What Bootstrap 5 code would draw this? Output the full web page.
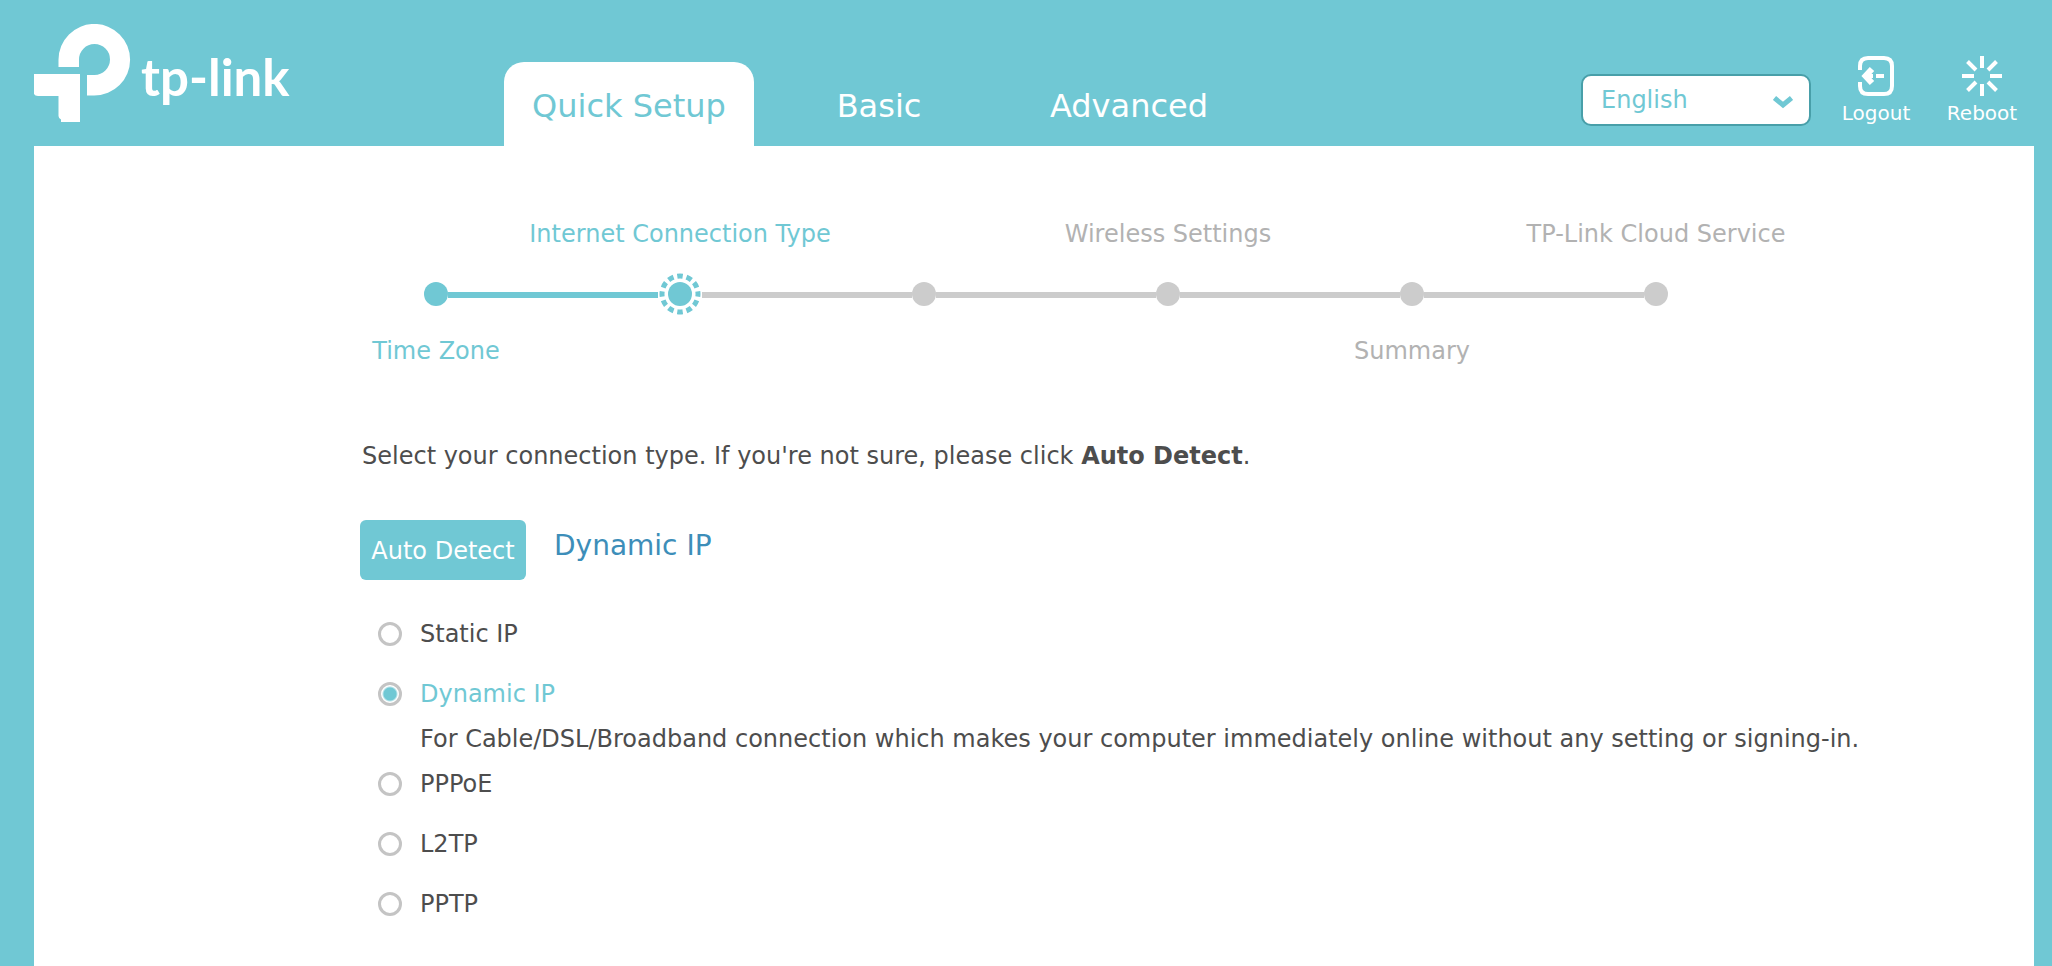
<!DOCTYPE html>
<html lang="en">
<head>
<meta charset="utf-8">
<meta name="viewport" content="width=device-width, initial-scale=1">
<title>Quick Setup</title>
<link href="https://cdn.jsdelivr.net/npm/bootstrap@5.3.0/dist/css/bootstrap.min.css" rel="stylesheet">
<style>
  :root { --teal: #70c8d4; --ink: #4d4d4d; }
  body { background: var(--teal); color: var(--ink); font-family: "DejaVu Sans", Verdana, sans-serif; font-size: 24px; line-height: 30px; }
  .shell { padding: 0 18px 0 34px; }
  .top-bar { height: 146px; }
  .brand-block { width: 470px; height: 146px; padding-top: 24px; gap: 10px; }
  .brand-word { font-family: Lato, sans-serif; font-size: 51px; font-weight: 700; line-height: 60px; padding-top: 23px; }
  .main-tabs .nav-link { width: 250px; height: 84px; padding: 24px 0 0; font-size: 32px; line-height: 40px; color: #fff; text-align: center; border-radius: 20px 20px 0 0; }
  .main-tabs .nav-link.active { background: #fff; color: var(--teal); }
  .tools { padding-right: 17px; }
  .lang { width: 230px; margin: 74px 30px 0 0; }
  .lang select { height: 52px; font-size: 24px; line-height: 30px; color: var(--teal); border: 2px solid #489fa9; border-radius: 10px; padding: 0 50px 0 18px; background: #fff; }
  .lang svg { right: 18px; top: 22px; pointer-events: none; }
  .tool { color: #fff; font-size: 20px; line-height: 26px; padding-top: 56px; width: 70px; gap: 4px; }
  .tool + .tool { margin-left: 36px; }
  .panel { min-height: calc(100vh - 146px); padding: 73px 0 36px; }
  .steps { margin: 0 256px 0 280px; }
  .step { flex: 1 1 0; min-width: 0; white-space: nowrap; color: #b2b2b2; }
  .step-name { height: 33px; }
  .step-track { height: 84px; }
  .bar { height: 6px; background: #ccc; flex: 1; margin-top: 2px; }
  .bar.on, .done .dot { background: var(--teal); }
  .bar.none { background: none; }
  .dot { width: 24px; height: 24px; border-radius: 50%; background: #ccc; }
  .done, .now { color: var(--teal); }
  .content { padding: 72px 24px 0 326px; }
  .intro { margin: 0 0 49px 2px; }
  .btn-detect { height: 60px; width: 166px; padding: 2px 0 0; font-size: 24px; line-height: 30px; color: #fff; background: var(--teal); border: 0; border-radius: 6px; white-space: nowrap; }
  .found { color: #3d8eb9; font-size: 28px; line-height: 52px; }
  .types { padding: 24px 0 0 18px; }
  .type-row { height: 60px; gap: 18px; }
  .type-row .form-check-input { width: 24px; height: 24px; margin: 0; border: 3px solid #c4c4c4; box-shadow: none; }
  .type-row .form-check-input:checked { background: radial-gradient(circle, var(--teal) 6px, #fff 8px); }
  .type-row :checked + label { color: var(--teal); }
  .type-note { padding-left: 42px; line-height: 30px; }
</style>
</head>
<body>
<div class="shell">
  <header class="top-bar d-flex">
    <a href="#" class="brand-block d-flex flex-shrink-0 text-white text-decoration-none">
      <svg width="97" height="98" viewBox="0 0 97 98" fill="#fff" aria-hidden="true">
        <path d="M24.5 43V35.7A35.8 35.8 0 1 1 60.3 71.5H53V51H60.3A15.5 15.5 0 1 0 45 35.7V43Z"/>
        <path d="M0 50H46V98H27V95.5Q24.5 94 24.5 92V72H4Q1 72 0 70Z"/>
      </svg>
      <span class="brand-word">tp-link</span>
    </a>
    <ul class="nav main-tabs flex-nowrap align-items-end">
      <li class="nav-item"><a class="nav-link active" aria-current="page" href="#">Quick Setup</a></li>
      <li class="nav-item"><a class="nav-link" href="#">Basic</a></li>
      <li class="nav-item"><a class="nav-link" href="#">Advanced</a></li>
    </ul>
    <div class="tools d-flex ms-auto">
      <div class="lang position-relative">
        <select class="form-select" aria-label="Language"><option>English</option></select>
        <svg class="position-absolute" width="20" height="13" viewBox="0 0 20 13" fill="none" stroke="#70c8d4" stroke-width="5" aria-hidden="true"><path d="M1.5 2L10 9L18.500 2"/></svg>
      </div>
      <a href="#" class="tool d-flex flex-column align-items-center text-decoration-none">
        <svg width="40" height="40" viewBox="0 0 40 40" fill="none" stroke="#fff" aria-hidden="true">
          <path stroke-width="4" d="M4 14V10Q4 2 12 2H28Q36 2 36 10V30Q36 38 28 38H12Q4 38 4 30V26"/>
          <path stroke-width="6" d="M16 13L9.500 20L16 27"/><path stroke-width="4" d="M10 20H17M20 20H28"/>
        </svg>Logout</a>
      <a href="#" class="tool d-flex flex-column align-items-center text-decoration-none">
        <svg width="40" height="40" viewBox="0 0 40 40" stroke="#fff" stroke-width="4" aria-hidden="true">
          <path d="M20 0V12M20 28V40M0 20H12M28 20H40M5.500 5.500L14 14M26 26L34.500 34.500M34.500 5.500L26 14M14 26L5.500 34.500"/>
        </svg>Reboot</a>
    </div>
  </header>

  <main class="panel bg-white">
    <div class="steps d-flex">
      <div class="step done">
        <div class="step-name"></div>
        <div class="step-track d-flex align-items-center"><span class="bar none"></span><span class="dot"></span><span class="bar on"></span></div>
        <div class="step-name d-flex justify-content-center">Time Zone</div>
      </div>
      <div class="step now">
        <div class="step-name d-flex justify-content-center">Internet Connection Type</div>
        <div class="step-track d-flex align-items-center"><span class="bar on"></span>
          <svg width="44" height="42" viewBox="-1 0 44 42" aria-hidden="true"><circle cx="21" cy="21" r="12" fill="#70c8d4"/><circle cx="21" cy="21" r="18" fill="none" stroke="#70c8d4" stroke-width="5" pathLength="120" stroke-dasharray="6 4" stroke-dashoffset="3"/></svg>
          <span class="bar"></span></div>
        <div class="step-name"></div>
      </div>
      <div class="step">
        <div class="step-name"></div>
        <div class="step-track d-flex align-items-center"><span class="bar"></span><span class="dot"></span><span class="bar"></span></div>
        <div class="step-name"></div>
      </div>
      <div class="step">
        <div class="step-name d-flex justify-content-center">Wireless Settings</div>
        <div class="step-track d-flex align-items-center"><span class="bar"></span><span class="dot"></span><span class="bar"></span></div>
        <div class="step-name"></div>
      </div>
      <div class="step">
        <div class="step-name"></div>
        <div class="step-track d-flex align-items-center"><span class="bar"></span><span class="dot"></span><span class="bar"></span></div>
        <div class="step-name d-flex justify-content-center">Summary</div>
      </div>
      <div class="step">
        <div class="step-name d-flex justify-content-center">TP-Link Cloud Service</div>
        <div class="step-track d-flex align-items-center"><span class="bar"></span><span class="dot"></span><span class="bar none"></span></div>
        <div class="step-name"></div>
      </div>
    </div>

    <form class="content">
      <p class="intro">Select your connection type. If you're not sure, please click <strong>Auto Detect</strong>.</p>
      <div class="d-flex align-items-start">
        <button type="button" class="btn btn-detect">Auto Detect</button>
        <output class="found ms-4 ps-1">Dynamic IP</output>
      </div>
      <div class="types">
        <div class="type-row d-flex align-items-center"><input class="form-check-input" type="radio" name="wan" id="wan-static"><label for="wan-static">Static IP</label></div>
        <div class="type-row d-flex align-items-center"><input class="form-check-input" type="radio" name="wan" id="wan-dynamic" checked><label for="wan-dynamic">Dynamic IP</label></div>
        <div class="type-note">For Cable/DSL/Broadband connection which makes your computer immediately online without any setting or signing-in.</div>
        <div class="type-row d-flex align-items-center"><input class="form-check-input" type="radio" name="wan" id="wan-pppoe"><label for="wan-pppoe">PPPoE</label></div>
        <div class="type-row d-flex align-items-center"><input class="form-check-input" type="radio" name="wan" id="wan-l2tp"><label for="wan-l2tp">L2TP</label></div>
        <div class="type-row d-flex align-items-center"><input class="form-check-input" type="radio" name="wan" id="wan-pptp"><label for="wan-pptp">PPTP</label></div>
      </div>
    </form>
  </main>
</div>
<script src="https://cdn.jsdelivr.net/npm/bootstrap@5.3.0/dist/js/bootstrap.bundle.min.js"></script>
</body>
</html>
